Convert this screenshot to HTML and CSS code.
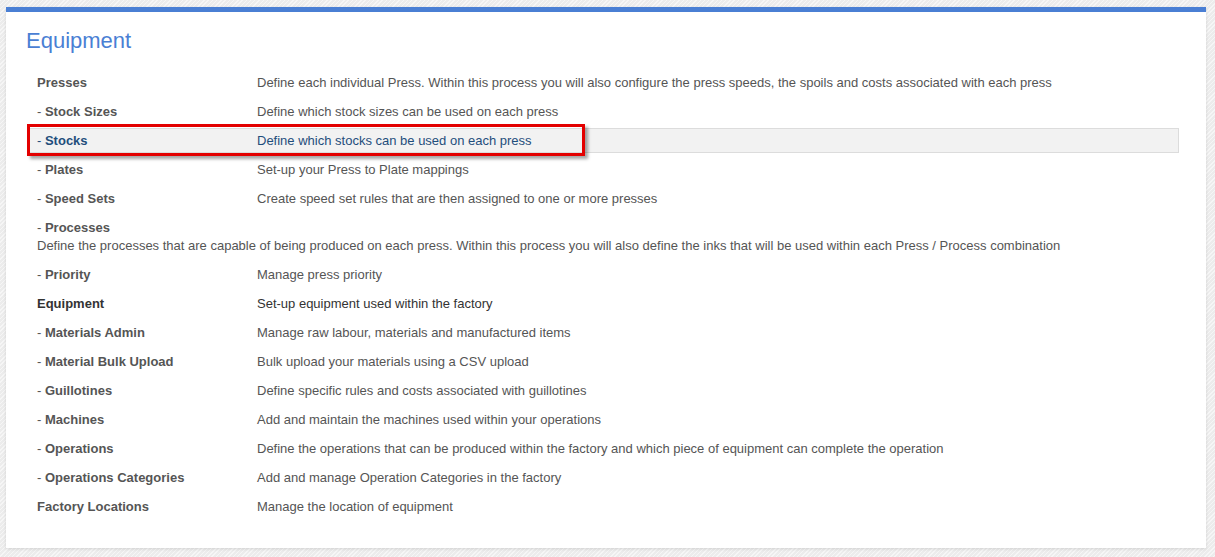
FILE: index.html
```html
<!DOCTYPE html>
<html lang="en">
<head>
<meta charset="utf-8">
<title>Equipment</title>
<link rel="stylesheet" href="styles.css">
</head>
<body>
<div class="card">
  <h1 class="title">Equipment</h1>
  <div class="list">
    <div class="row"><div class="label">Presses</div><div class="desc">Define each individual Press. Within this process you will also configure the press speeds, the spoils and costs associated with each press</div></div>
    <div class="row"><div class="label"><span class="dash">- </span>Stock Sizes</div><div class="desc">Define which stock sizes can be used on each press</div></div>
    <div class="row row-active"><div class="label"><span class="dash">- </span>Stocks</div><div class="desc">Define which stocks can be used on each press</div><div class="annotation"></div></div>
    <div class="row"><div class="label"><span class="dash">- </span>Plates</div><div class="desc">Set-up your Press to Plate mappings</div></div>
    <div class="row"><div class="label"><span class="dash">- </span>Speed Sets</div><div class="desc">Create speed set rules that are then assigned to one or more presses</div></div>
    <div class="row row-wrap"><div class="label"><span class="dash">- </span>Processes</div><div class="desc">Define the processes that are capable of being produced on each press. Within this process you will also define the inks that will be used within each Press / Process combination</div></div>
    <div class="row"><div class="label"><span class="dash">- </span>Priority</div><div class="desc">Manage press priority</div></div>
    <div class="row row-dark"><div class="label">Equipment</div><div class="desc">Set-up equipment used within the factory</div></div>
    <div class="row"><div class="label"><span class="dash">- </span>Materials Admin</div><div class="desc">Manage raw labour, materials and manufactured items</div></div>
    <div class="row"><div class="label"><span class="dash">- </span>Material Bulk Upload</div><div class="desc">Bulk upload your materials using a CSV upload</div></div>
    <div class="row"><div class="label"><span class="dash">- </span>Guillotines</div><div class="desc">Define specific rules and costs associated with guillotines</div></div>
    <div class="row"><div class="label"><span class="dash">- </span>Machines</div><div class="desc">Add and maintain the machines used within your operations</div></div>
    <div class="row"><div class="label"><span class="dash">- </span>Operations</div><div class="desc">Define the operations that can be produced within the factory and which piece of equipment can complete the operation</div></div>
    <div class="row"><div class="label"><span class="dash">- </span>Operations Categories</div><div class="desc">Add and manage Operation Categories in the factory</div></div>
    <div class="row"><div class="label">Factory Locations</div><div class="desc">Manage the location of equipment</div></div>
  </div>
</div>
</body>
</html>
```

FILE: styles.css
```css
html, body {
  margin: 0;
  padding: 0;
}
body {
  background-color: #ececec;
  background-image: repeating-linear-gradient(135deg, rgba(255,255,255,0.55) 0 1px, rgba(0,0,0,0) 1px 3px);
  font-family: "Liberation Sans", Arial, sans-serif;
  font-size: 13px;
  color: #555;
  min-height: 557px;
  overflow: hidden;
}
.card {
  margin: 7px 9px 0 6px;
  background: #fff;
  border-top: 5px solid #4a7fd4;
  padding: 0 27px 27px 22px;
  box-shadow: 0 1px 3px rgba(0,0,0,0.12);
}
.title {
  margin: 17px 0 15px -2px;
  font-size: 22px;
  line-height: 24px;
  font-weight: normal;
  color: #4a7fd4;
}
.list {
  display: flex;
  flex-direction: column;
}
.row {
  position: relative;
  display: flex;
  flex-wrap: wrap;
  margin: 2px 0;
  padding: 3px 7px 3px 8px;
  border: 1px solid transparent;
  line-height: 17px;
}
.row-wrap .desc {
  margin-top: 1px;
}
.label {
  flex: 0 0 220px;
  font-weight: bold;
  color: #555;
}
.dash {
  font-weight: normal;
}
.desc {
  flex: 0 0 auto;
  color: #555;
}
.row-active {
  background: #f2f2f2;
  border-color: #dcdcdc;
}
.row-active .label,
.row-active .desc {
  color: #1f4e7c;
}
.row-dark .label,
.row-dark .desc {
  color: #333;
}
.annotation {
  position: absolute;
  left: -2px;
  top: -5px;
  width: 552px;
  height: 26px;
  border: 3px solid #e30000;
  box-shadow: 3px 3px 3px rgba(0,0,0,0.35);
  pointer-events: none;
}
```
